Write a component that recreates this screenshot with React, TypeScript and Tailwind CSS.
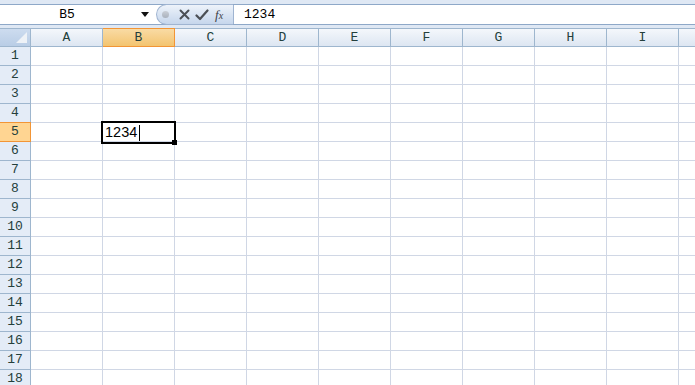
import React from "react";

const cols = ["A", "B", "C", "D", "E", "F", "G", "H", "I", ""];
const rows = Array.from({ length: 18 }, (_, i) => i + 1);

const mono = { fontFamily: '"Liberation Mono", "DejaVu Sans Mono", monospace' };

export default function App() {
  return (
    <div className="relative w-[695px] h-[385px] overflow-hidden bg-white select-none">
      {/* Formula bar */}
      <div className="h-[28px] bg-[#dfe8f4] pt-[4px] pb-[3px]">
        <div className="flex h-[21px] border-y border-[#8ea8c8] bg-white">
          <div className="relative flex w-[156px] items-center">
            <div className="w-[134px] text-center text-[13px] text-black leading-none" style={mono}>
              B5
            </div>
            <svg width="8" height="5" viewBox="0 0 8 5" className="ml-[7px]">
              <path d="M0 0 L8 0 L4 5 Z" fill="#111" />
            </svg>
          </div>
          <div className="relative -my-px flex h-[21px] w-[77px] items-center rounded-l-full border border-r-0 border-[#9fb4d1] bg-gradient-to-b from-[#eef3fa] via-[#d9e4f3] to-[#c6d6ec]">
            <div className="ml-[5px] h-[7px] w-[7px] rounded-full bg-gradient-to-b from-[#c9ced6] to-[#a9b1bd]" />
            <svg width="11" height="11" viewBox="0 0 11 11" className="ml-[10px]">
              <path d="M1.5 1.5 L9.5 9.5 M9.5 1.5 L1.5 9.5" stroke="#4b4f55" strokeWidth="2" strokeLinecap="round" />
            </svg>
            <svg width="14" height="12" viewBox="0 0 14 12" className="ml-[5px]">
              <path d="M1.5 6.5 L5 10 L12.5 1.5" stroke="#4b4f55" strokeWidth="2.2" fill="none" strokeLinecap="round" strokeLinejoin="round" />
            </svg>
            <span
              className="ml-[6px] text-[13px] italic leading-none text-[#3d4148]"
              style={{ fontFamily: '"Liberation Serif", "DejaVu Serif", serif' }}
            >
              f<span className="text-[10px]">x</span>
            </span>
          </div>
          <div className="flex flex-1 items-center border-l border-[#9fb4d1] pl-[10px]">
            <span className="text-[13px] leading-none text-black" style={mono}>
              1234
            </span>
          </div>
        </div>
      </div>

      {/* Column header row */}
      <div className="flex h-[19px]">
        <div className="relative w-[31px] shrink-0 border-y border-r border-[#9eb6ce] bg-gradient-to-b from-[#cddcef] to-[#b9cde6]">
          <svg width="11" height="11" viewBox="0 0 11 11" className="absolute right-[3px] bottom-[3px]">
            <path d="M11 0 L11 11 L0 11 Z" fill="#eef2f7" />
          </svg>
        </div>
        {cols.map((c, i) => (
          <div
            key={i}
            className={
              c === "B"
                ? "flex w-[72px] shrink-0 items-center justify-center border border-l-0 border-[#f29536] bg-gradient-to-b from-[#f9dba4] to-[#f3c46f] text-[13px] text-[#243f3c]"
                : "flex w-[72px] shrink-0 items-center justify-center border-y border-r border-[#9eb6ce] bg-gradient-to-b from-[#f4f7fb] to-[#dde6f2] text-[13px] text-[#243f3c]"
            }
            style={mono}
          >
            {c}
          </div>
        ))}
      </div>

      {/* Rows */}
      {rows.map((r) => (
        <div key={r} className="flex h-[19px]">
          <div
            className={
              r === 5
                ? "flex w-[31px] shrink-0 items-center justify-center border-y border-r border-[#f29536] bg-[#ffd592] text-[13px] text-[#243f3c] -mt-px h-[20px]"
                : "flex w-[31px] shrink-0 items-center justify-center border-b border-r border-[#9eb6ce] bg-[#e4ecf7] text-[13px] text-[#243f3c]"
            }
            style={mono}
          >
            {r}
          </div>
          {cols.map((c, i) => (
            <div key={i} className="w-[72px] shrink-0 border-b border-r border-[#d0d7e5]" />
          ))}
        </div>
      ))}

      {/* Active cell B5 */}
      <div className="absolute left-[101px] top-[121px] h-[23px] w-[75px] border-2 border-black">
        <div
          className="absolute left-[2px] top-[1px] flex h-[17px] items-center text-[14.5px] leading-none text-black"
          style={{ fontFamily: '"Liberation Sans", Arial, sans-serif' }}
        >
          1234
          <span className="ml-[2px] inline-block h-[16px] w-px bg-black" />
        </div>
        <div className="absolute -bottom-[3px] -right-[3px] h-[5px] w-[5px] bg-black" />
      </div>
    </div>
  );
}
